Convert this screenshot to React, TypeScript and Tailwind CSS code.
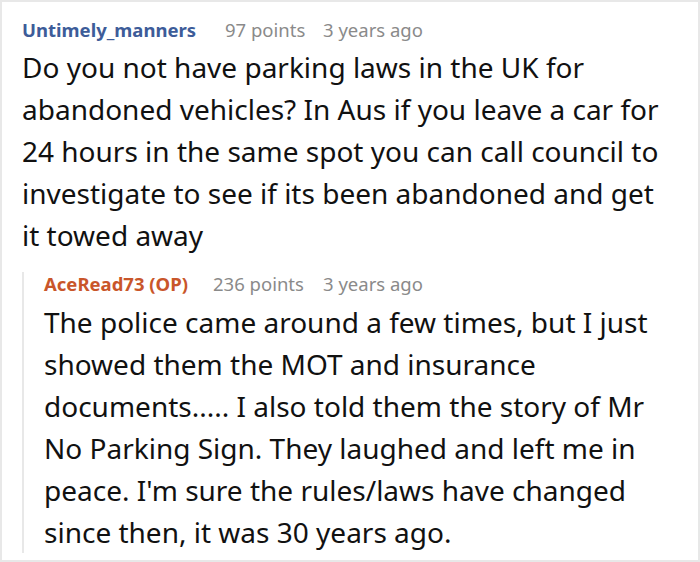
export default function App() {
  return (
    <div className="w-[700px] h-[562px] bg-white border-2 border-[#e8e8e8] overflow-hidden text-[#111111]" style={{ fontFamily: '"Noto Sans", sans-serif' }}>
      <div className="pl-[20px] pr-[36px] pt-[16px]">
        <div className="flex items-center h-[24px] text-[18.5px]">
          <span className="font-bold text-[#3d5c99] w-[203px]">Untimely_manners</span>
          <span className="text-[#8a8a8a] w-[98px]">97 points</span>
          <span className="text-[#8a8a8a]">3 years ago</span>
        </div>
        <p className="text-[28px] leading-[42px] mt-[4px]">
          Do you not have parking laws in the UK for abandoned vehicles? In Aus if you leave a car for 24 hours in the same spot you can call council to investigate to see if its been abandoned and get it towed away
        </p>
        <div className="mt-[16px] border-l-2 border-[#e8e8e8] pl-[20px]">
          <div className="flex items-center h-[24px] text-[18.5px]">
            <span className="font-bold text-[#c9562a] w-[169px]">AceRead73 (OP)</span>
            <span className="text-[#8a8a8a] w-[110px]">236 points</span>
            <span className="text-[#8a8a8a]">3 years ago</span>
          </div>
          <p className="text-[28px] leading-[42px] mt-[5px]">
            The police came around a few times, but I just showed them the MOT and insurance documents..... I also told them the story of Mr No Parking Sign. They laughed and left me in peace. I'm sure the rules/laws have changed since then, it was 30 years ago.
          </p>
        </div>
      </div>
    </div>
  );
}
